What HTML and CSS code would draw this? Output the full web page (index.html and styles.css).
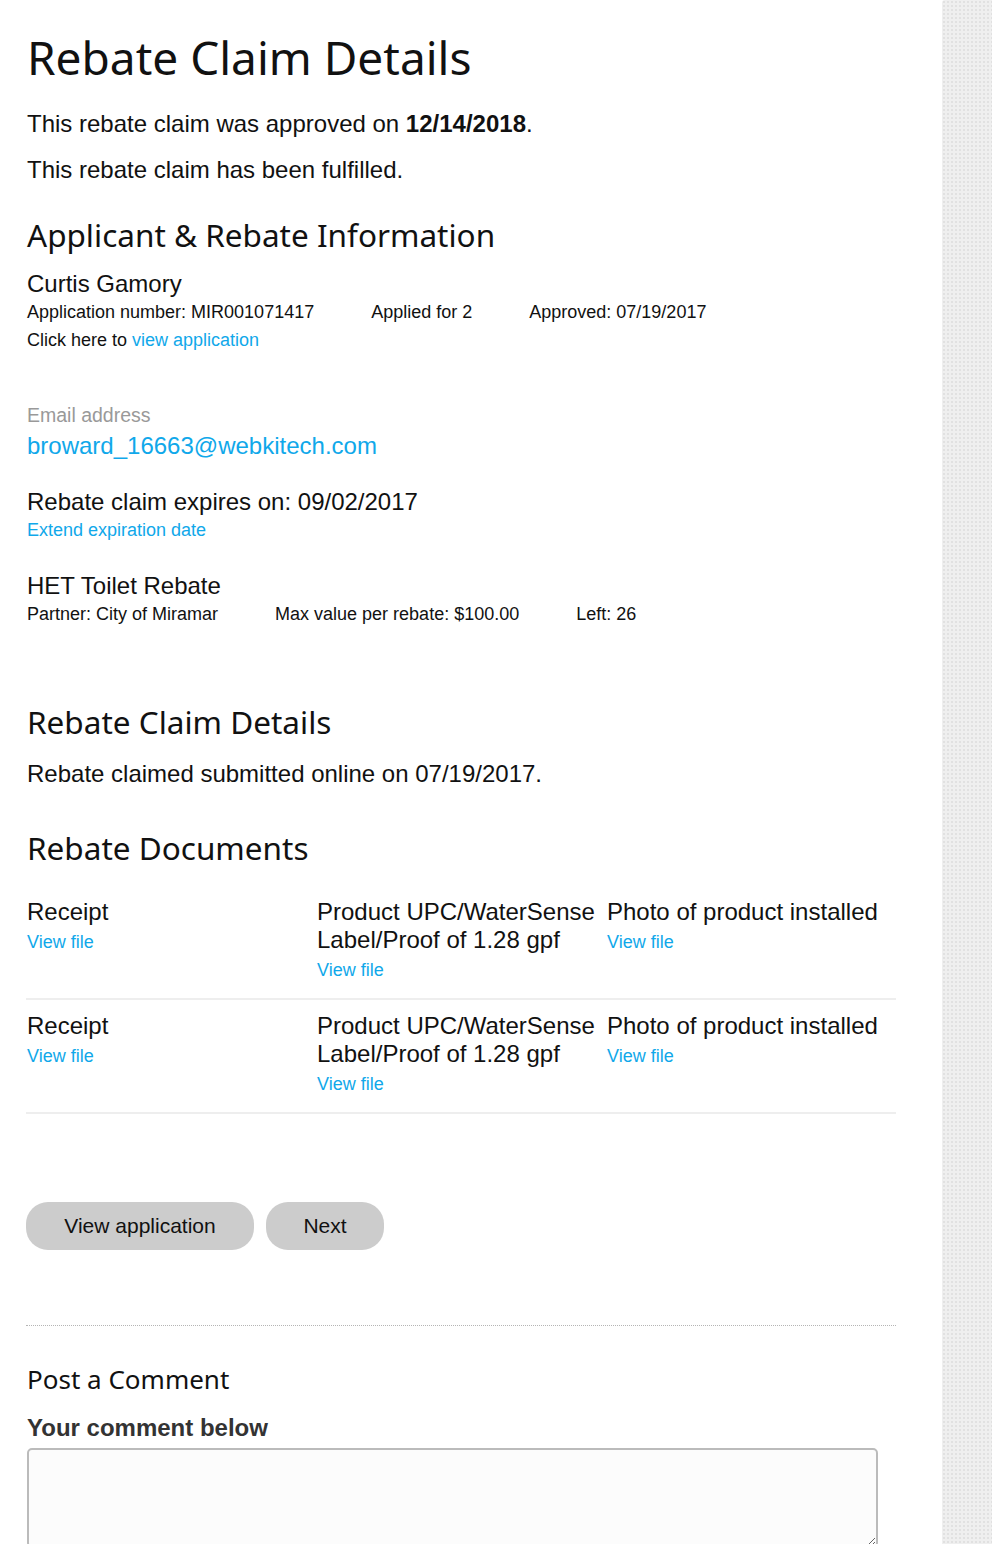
FILE: index.html
```html
<!DOCTYPE html>
<html lang="en">
<head>
<meta charset="utf-8">
<title>Rebate Claim Details</title>
<link rel="stylesheet" href="styles.css">
</head>
<body>
<div class="page">
  <main class="main">
    <h1 class="title">Rebate Claim Details</h1>
    <p class="lead first">This rebate claim was approved on <strong>12/14/2018</strong>.</p>
    <p class="lead second">This rebate claim has been fulfilled.</p>

    <h2 class="section-title s-applicant">Applicant &amp; Rebate Information</h2>
    <div class="applicant">
      <div class="name">Curtis Gamory</div>
      <div class="meta-row">
        <span>Application number: MIR001071417</span>
        <span>Applied for 2</span>
        <span>Approved: 07/19/2017</span>
      </div>
      <div class="small">Click here to <a class="link" href="#">view application</a></div>
    </div>

    <div class="email-block">
      <div class="label">Email address</div>
      <a class="link email" href="#">broward_16663@webkitech.com</a>
    </div>

    <div class="expires">
      <div class="name">Rebate claim expires on: 09/02/2017</div>
      <a class="link small block" href="#">Extend expiration date</a>
    </div>

    <div class="rebate">
      <div class="name">HET Toilet Rebate</div>
      <div class="meta-row">
        <span>Partner: City of Miramar</span>
        <span>Max value per rebate: $100.00</span>
        <span>Left: 26</span>
      </div>
    </div>

    <h2 class="section-title s-claim">Rebate Claim Details</h2>
    <p class="lead submitted">Rebate claimed submitted online on 07/19/2017.</p>

    <h2 class="section-title s-docs">Rebate Documents</h2>
    <div class="docs">
      <div class="doc-row">
        <div class="doc">
          <div class="doc-name">Receipt</div>
          <a class="link file" href="#">View file</a>
        </div>
        <div class="doc">
          <div class="doc-name">Product UPC/WaterSense Label/Proof of 1.28 gpf</div>
          <a class="link file" href="#">View file</a>
        </div>
        <div class="doc">
          <div class="doc-name">Photo of product installed</div>
          <a class="link file" href="#">View file</a>
        </div>
      </div>
      <div class="doc-row">
        <div class="doc">
          <div class="doc-name">Receipt</div>
          <a class="link file" href="#">View file</a>
        </div>
        <div class="doc">
          <div class="doc-name">Product UPC/WaterSense Label/Proof of 1.28 gpf</div>
          <a class="link file" href="#">View file</a>
        </div>
        <div class="doc">
          <div class="doc-name">Photo of product installed</div>
          <a class="link file" href="#">View file</a>
        </div>
      </div>
    </div>

    <div class="actions">
      <button class="btn btn-wide" type="button">View application</button>
      <button class="btn btn-next" type="button">Next</button>
    </div>

    <div class="comment">
      <h3 class="comment-title">Post a Comment</h3>
      <label class="comment-label" for="comment">Your comment below</label>
      <textarea id="comment" class="comment-box"></textarea>
    </div>
  </main>
  <aside class="sidebar"></aside>
</div>
</body>
</html>
```

FILE: styles.css
```css
* { box-sizing: border-box; }

html, body {
  margin: 0;
  padding: 0;
  background: #ffffff;
}

body {
  font-family: "Liberation Sans", Arial, sans-serif;
  color: #111111;
}

.page {
  display: flex;
  min-height: 1544px;
}

.main {
  width: 942px;
  padding: 27px 46px 0 26px;
}

.sidebar {
  flex: 1;
  background-color: #efefef;
  background-image: radial-gradient(circle, #e1e1e1 0.8px, transparent 1px);
  background-size: 4px 4px;
  border-top-left-radius: 3px;
}

.title {
  margin: 0 0 0 1px;
  font-family: "Noto Sans", "Open Sans", sans-serif;
  font-weight: 400;
  font-size: 46px;
  line-height: 60px;
  color: #111;
}

.lead {
  margin: 0 0 0 1px;
  font-size: 24px;
  line-height: 30px;
}

.lead.first { margin-top: 22px; }
.lead.second { margin-top: 16px; }
.lead strong { font-weight: 700; }

.section-title {
  margin: 0 0 0 1px;
  font-family: "Noto Sans", "Open Sans", sans-serif;
  font-weight: 400;
  font-size: 31.5px;
  line-height: 40px;
  color: #111;
}

.s-applicant { margin-top: 30px; }
.s-claim { margin-top: 74px; }
.s-docs { margin-top: 39px; }

.applicant { margin: 15px 0 0 1px; }

.name {
  font-size: 24px;
  line-height: 28px;
}

.meta-row {
  display: flex;
  gap: 57px;
  font-size: 18px;
  line-height: 28px;
}

.small {
  font-size: 18px;
  line-height: 28px;
}

.block { display: block; }

.link {
  color: #10a8ea;
  text-decoration: none;
}

.email-block { margin: 47px 0 0 1px; }

.label {
  font-size: 19.5px;
  line-height: 28px;
  color: #999999;
}

.email {
  display: block;
  font-size: 24px;
  line-height: 34px;
}

.expires { margin: 25px 0 0 1px; }

.rebate { margin: 28px 0 0 1px; }

.submitted { margin-top: 17px; }

.docs {
  margin-top: 18px;
  width: 870px;
}

.doc-row {
  display: grid;
  grid-template-columns: 290px 290px 290px;
  padding: 12px 0;
  border-bottom: 2px solid #eeeeee;
}

.doc { padding-left: 1px; }

.doc-name {
  font-size: 24px;
  line-height: 28px;
  padding-right: 8px;
}

.file {
  display: block;
  font-size: 18px;
  line-height: 32px;
}

.actions {
  display: flex;
  gap: 12px;
  margin-top: 88px;
}

.btn {
  height: 48px;
  border: 0;
  border-radius: 22px;
  background: #cccccc;
  color: #111;
  font-family: "Liberation Sans", Arial, sans-serif;
  font-size: 21px;
  line-height: 48px;
  cursor: pointer;
}

.btn-wide { width: 228px; padding: 0; }
.btn-next { width: 118px; padding: 0; }

.comment {
  margin-top: 75px;
  width: 870px;
  border-top: 1px dotted #b5b5b5;
  padding-top: 35px;
}

.comment-title {
  margin: 0 0 0 1px;
  font-family: "Noto Sans", "Open Sans", sans-serif;
  font-weight: 400;
  font-size: 26px;
  line-height: 36px;
  color: #111;
}

.comment-label {
  display: block;
  margin: 16px 0 0 1px;
  font-size: 24px;
  line-height: 30px;
  font-weight: 700;
  color: #333333;
}

.comment-box {
  display: block;
  margin: 5px 0 0 1px;
  width: 851px;
  height: 100px;
  border: 2px solid #bbbbbb;
  border-radius: 5px;
  background: #fcfcfc;
  resize: vertical;
}
```
